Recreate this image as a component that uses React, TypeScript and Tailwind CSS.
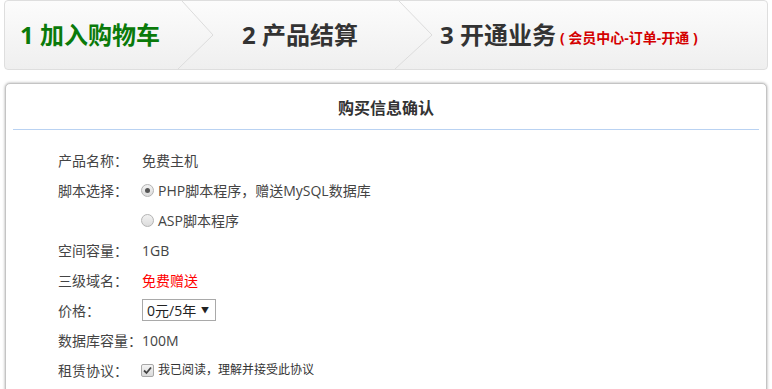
import { useState } from "react";

const font = { fontFamily: '"Open Sans", "Noto Sans CJK SC", sans-serif' };

function Chevron({ width }: { width: number }) {
  return (
    <svg width={width} height="68" viewBox={`0 0 ${width} 68`} className="shrink-0">
      <polyline
        points={`4,0 ${width - 1},34 0,68`}
        fill="none"
        stroke="#dcdcdc"
        strokeWidth="1"
      />
    </svg>
  );
}

function StepBar() {
  return (
    <div className="mx-[4px] h-[70px] flex items-stretch rounded-[4px] border border-[#dedede] bg-gradient-to-b from-[#fcfcfc] to-[#efefef]">
      <div className="w-[173px] pl-[15px] flex items-center text-[24px] font-bold text-[#0a7a0a]">
        1 加入购物车
      </div>
      <Chevron width={36} />
      <div className="w-[181px] pl-[28px] flex items-center text-[24px] font-bold text-[#333]">
        2 产品结算
      </div>
      <Chevron width={38} />
      <div className="flex-1 pl-[7px] flex items-center">
        <span className="text-[24px] font-bold text-[#333]">3 开通业务</span>
        <span className="ml-[4px] mt-[5px] text-[14px] font-bold text-[#d40000]">
          ( 会员中心-订单-开通 )
        </span>
      </div>
    </div>
  );
}

function Radio({ checked }: { checked?: boolean }) {
  return (
    <span className="w-[13px] h-[13px] rounded-full border border-[#b4b4b4] bg-gradient-to-b from-[#f2f2f2] to-[#dcdcdc] flex items-center justify-center shrink-0">
      {checked && <span className="w-[5px] h-[5px] rounded-full bg-[#555]" />}
    </span>
  );
}

function Row({ label, children }: { label: string; children: React.ReactNode }) {
  return (
    <div className="h-[30px] flex items-center text-[14px] text-[#444]">
      <div className="w-[84px] shrink-0">{label}</div>
      <div className="flex items-center">{children}</div>
    </div>
  );
}

export default function App() {
  const [script, setScript] = useState("php");
  const [agree, setAgree] = useState(true);

  return (
    <div className="w-[772px] h-[389px] overflow-hidden bg-white" style={font}>
      <StepBar />
      <div className="mx-[5px] mt-[13px] rounded-[5px] border border-[#c4c4c4] shadow-[0_0_3px_rgba(0,0,0,0.35)] bg-white px-[7px] pb-8">
        <div className="h-[45px] pt-[3px] flex items-center justify-center text-[16px] font-bold text-[#333]">
          购买信息确认
        </div>
        <div className="h-px bg-[#b9d2f2]" />
        <div className="pt-[15px] pl-[45px]">
          <Row label="产品名称：">免费主机</Row>
          <Row label="脚本选择：">
            <button className="flex items-center gap-[4px] -ml-[1px]" onClick={() => setScript("php")}>
              <Radio checked={script === "php"} />
              PHP脚本程序，赠送MySQL数据库
            </button>
          </Row>
          <Row label="">
            <button className="flex items-center gap-[4px] -ml-[1px]" onClick={() => setScript("asp")}>
              <Radio checked={script === "asp"} />
              ASP脚本程序
            </button>
          </Row>
          <Row label="空间容量：">1GB</Row>
          <Row label="三级域名：">
            <span className="text-[#f00]">免费赠送</span>
          </Row>
          <Row label="价格：">
            <div className="w-[74px] h-[22px] border border-[#a9a9a9] flex items-center pl-[4px] pr-[6px] justify-between text-[#222] bg-white">
              <span>0元/5年</span>
              <span className="text-[8px]">▼</span>
            </div>
          </Row>
          <Row label="数据库容量：">100M</Row>
          <Row label="租赁协议：">
            <button className="flex items-center gap-[4px] -ml-[1px] text-[12px] text-[#333]" onClick={() => setAgree(!agree)}>
              <span className="w-[13px] h-[13px] border border-[#a8a8a8] rounded-[2px] bg-gradient-to-b from-[#f4f4f4] to-[#dadada] flex items-center justify-center">
                {agree && (
                  <svg width="9" height="9" viewBox="0 0 9 9">
                    <path d="M1 4.5 L3.5 7 L8 1.5" fill="none" stroke="#444" strokeWidth="1.8" />
                  </svg>
                )}
              </span>
              我已阅读，理解并接受此协议
            </button>
          </Row>
        </div>
      </div>
    </div>
  );
}
